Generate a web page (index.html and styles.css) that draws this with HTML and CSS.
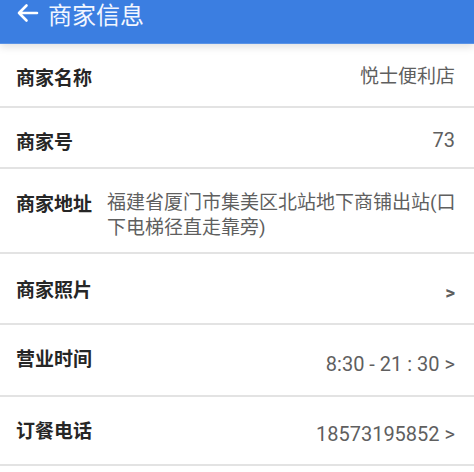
FILE: index.html
```html
<!DOCTYPE html>
<html lang="zh-CN">
  <head>
    <meta charset="UTF-8" />
    <meta name="viewport" content="width=device-width, initial-scale=1.0" />
    <title>商家信息</title>
    <link rel="stylesheet" href="styles.css">
  </head>
  <body>
    <div class="top-bar">
      <svg class="back" width="24" height="24" viewBox="0 0 24 24">
        <path d="M22 12H4 M11.5 4.5L4 12l7.5 7.5" fill="none" stroke="#fff" stroke-width="2.6" stroke-linecap="round" stroke-linejoin="round"/>
      </svg>
      <span class="title">商家信息</span>
    </div>

    <div class="info-list">
      <div class="row row-name">
        <span class="label">商家名称</span>
        <span class="value">悦士便利店</span>
      </div>
      <div class="row row-num">
        <span class="label">商家号</span>
        <span class="value num">73</span>
      </div>
      <div class="row row-addr">
        <span class="label">商家地址</span>
        <span class="value address">福建省厦门市集美区北站地下商铺出站(口下电梯径直走靠旁)</span>
      </div>
      <div class="row row-photo">
        <span class="label">商家照片</span>
        <span class="value arrow-only">&gt;</span>
      </div>
      <div class="row row-time">
        <span class="label">营业时间</span>
        <span class="value num">8:30 - 21 : 30 &gt;</span>
      </div>
      <div class="row row-tel">
        <span class="label">订餐电话</span>
        <span class="value num">18573195852 &gt;</span>
      </div>
    </div>
  </body>
</html>
```

FILE: styles.css
```css
body
{
    margin: 0;
    background: #fff;
    font-family: Roboto, "Noto Sans CJK SC", sans-serif;
}

.top-bar
{
    position: relative;
    z-index: 1;
    display: flex;
    align-items: flex-start;
    height: 44px;
    padding-left: 15px;
    background: #3b7ee1;
    border-bottom: 1px solid #5a93e6;
    box-shadow: 0 3px 8px rgba(0, 0, 0, 0.12);
    box-sizing: border-box;
}

.back
{
    margin-top: 1px;
}

.title
{
    margin-left: 9px;
    font-family: "Noto Sans CJK SC", sans-serif;
    font-size: 24px;
    line-height: 28px;
    color: #f2f6ff;
}

.row
{
    display: flex;
    align-items: flex-start;
    justify-content: space-between;
    padding: 20px 19px 0 16px;
    border-bottom: 2px solid #e3e3e3;
    box-sizing: border-box;
}

.label
{
    flex-shrink: 0;
    font-family: "Noto Sans CJK SC", sans-serif;
    font-weight: bold;
    font-size: 19px;
    line-height: 25px;
    color: #262626;
}

.value
{
    font-size: 19px;
    line-height: 25px;
    color: #5f5f5f;
    text-align: right;
}

.num
{
    font-size: 20px;
}

.row-name { height: 64px; }
.row-num { height: 61px; }

.row-addr
{
    height: 85px;
    padding-top: 21px;
    padding-right: 16px;
}

.address
{
    flex: 1;
    margin-left: 15px;
    text-align: left;
}

.row-photo
{
    height: 71px;
    padding-top: 22px;
}

.arrow-only
{
    margin-top: 4px;
    font-weight: bold;
}

.row-time { height: 72px; }
.row-time .value { margin-top: 7px; }

.row-tel { height: 69px; }
.row-tel .value { margin-top: 5px; }
```
